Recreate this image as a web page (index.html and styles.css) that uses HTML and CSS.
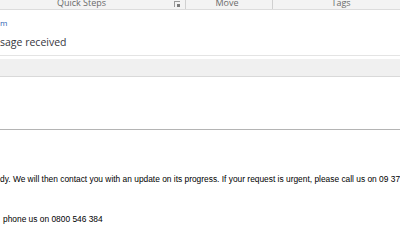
FILE: index.html
```html
<!DOCTYPE html>
<html lang="en">
<head>
  <meta charset="UTF-8" />
  <title>Message received</title>
  <link rel="stylesheet" href="styles.css">
</head>
<body>

  <!-- Ribbon group labels -->
  <div class="ribbon">
    <div class="group group-steps">
      <span class="label">Quick Steps</span>
      <span class="launcher"></span>
    </div>
    <div class="group group-move">
      <span class="label">Move</span>
    </div>
    <div class="group group-tags">
      <span class="label">Tags</span>
    </div>
  </div>

  <!-- Message header -->
  <div class="header">
    <div class="sender">m</div>
    <div class="subject">sage received</div>
  </div>

  <div class="infobar"></div>

  <div class="attach-area"></div>

  <!-- Message body -->
  <div class="body">
    <p class="line">dy. We will then contact you with an update on its progress. If your request is urgent, please call us on 09 37</p>
    <p class="line indent">phone us on 0800 546 384</p>
  </div>

</body>
</html>
```

FILE: styles.css
```css
body {
  margin: 0;
  background: #fff;
  color: #000;
  font-family: "Open Sans", Arial, sans-serif;
  overflow: hidden;
  height: 250px;
}

.ribbon {
  display: flex;
  height: 9px;
  background: #f3f3f3;
  border-bottom: 1px solid #dcdcdc;
  overflow: hidden;
}

.group {
  display: flex;
  justify-content: center;
  flex-shrink: 0;
  position: relative;
  border-right: 1px solid #d0d0d0;
  height: 9px;
}

.group-steps {
  width: 185px;
}

.group-move {
  width: 86px;
}

.group-tags {
  width: 140px;
}

.label {
  font-size: 9px;
  line-height: 9px;
  margin-top: -2px;
  color: #6b6b6b;
  white-space: nowrap;
}

.group-steps .label {
  margin-right: 22px;
}

.group-move .label {
  margin-right: 4px;
}

.group-tags .label {
  margin-right: 4px;
}

/* dialog launcher: small corner with an arrow */
.launcher {
  position: absolute;
  right: 5px;
  top: 1px;
  width: 5px;
  height: 5px;
  border-left: 1px solid #9a9a9a;
  border-top: 1px solid #9a9a9a;
}

.launcher::after {
  content: "";
  position: absolute;
  right: 0;
  bottom: 0;
  width: 3px;
  height: 3px;
  background: #7a7a7a;
}

.header {
  height: 45px;
  border-bottom: 1px solid #e4e4e4;
}

.sender {
  padding-top: 8px;
  font-size: 8px;
  line-height: 10px;
  color: #2c5fb3;
}

.subject {
  margin-top: 7px;
  font-size: 10.5px;
  line-height: 14px;
  color: #363640;
  white-space: nowrap;
}

.infobar {
  margin-top: 3px;
  height: 17px;
  background: #f0f0f0;
  border-bottom: 1px solid #d9d9d9;
}

.attach-area {
  height: 52px;
  border-bottom: 1px solid #b4b4b4;
}

.body {
  font-family: "Liberation Sans", Arial, sans-serif;
  font-size: 8.4px;
  padding-top: 44px;
}

.line {
  margin: 0 0 30px;
  line-height: 10px;
  white-space: nowrap;
}

.indent {
  padding-left: 3px;
}
```
